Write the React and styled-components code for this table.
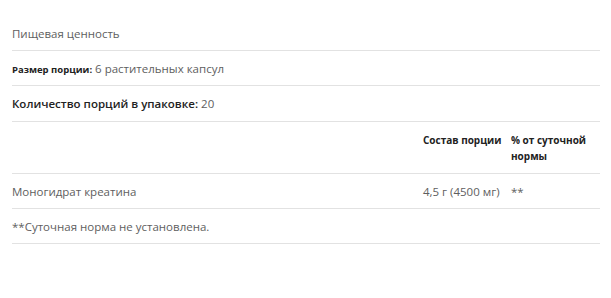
import styled, { createGlobalStyle } from "styled-components";

const GlobalStyle = createGlobalStyle`
  body {
    margin: 0;
    background: #fff;
    font-family: "Open Sans", "Noto Sans", sans-serif;
  }
`;

const Wrapper = styled.div`
  padding: 16px 11px 0 12px;
  color: #5e5e5e;
`;

const Row = styled.div`
  display: grid;
  grid-template-columns: 1fr 88px 89px;
  align-items: ${(p) => (p.$head ? "start" : "center")};
  height: ${(p) => (p.$head ? "52px" : p.$tall ? "36px" : "35px")};
  padding-top: ${(p) => (p.$head ? "10px" : "0")};
  box-sizing: border-box;
  border-bottom: 1px solid #e2e2e2;
  font-size: 11.5px;
`;

const Full = styled.div`
  grid-column: 1 / -1;
  font-size: ${(p) => p.$size || "11.5px"};
`;

const Label = styled.span`
  font-weight: ${(p) => p.$weight || 700};
  color: #222;
  font-size: ${(p) => p.$size || "inherit"};
`;

const HeadCell = styled.div`
  font-size: 10px;
  font-weight: 700;
  line-height: 16px;
  color: #222;
`;

const Cell = styled.div`
  color: #5e5e5e;
`;

const App = () => {
  return (
    <>
      <GlobalStyle />
      <Wrapper>
        <Row>
          <Full>Пищевая ценность</Full>
        </Row>
        <Row>
          <Full>
            <Label $size="9.5px">Размер порции:</Label> 6 растительных капсул
          </Full>
        </Row>
        <Row $tall>
          <Full $size="11.5px">
            <Label $weight={600}>Количество порций в упаковке:</Label> 20
          </Full>
        </Row>
        <Row $head>
          <div />
          <HeadCell>Состав порции</HeadCell>
          <HeadCell>
            % от суточной
            <br />
            нормы
          </HeadCell>
        </Row>
        <Row>
          <Cell>Моногидрат креатина</Cell>
          <Cell>4,5 г (4500 мг)</Cell>
          <Cell>**</Cell>
        </Row>
        <Row>
          <Full>**Суточная норма не установлена.</Full>
        </Row>
      </Wrapper>
    </>
  );
};

export default App;
